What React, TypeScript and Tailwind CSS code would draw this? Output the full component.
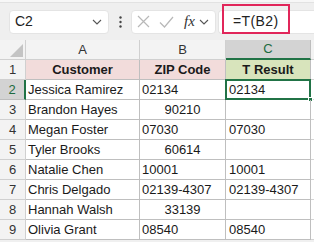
import React from "react";

type Row = { n: number; name: string; zip: string; zipNum?: boolean; t: string };

const rows: Row[] = [
  { n: 2, name: "Jessica Ramirez", zip: "02134", t: "02134" },
  { n: 3, name: "Brandon Hayes", zip: "90210", zipNum: true, t: "" },
  { n: 4, name: "Megan Foster", zip: "07030", t: "07030" },
  { n: 5, name: "Tyler Brooks", zip: "60614", zipNum: true, t: "" },
  { n: 6, name: "Natalie Chen", zip: "10001", t: "10001" },
  { n: 7, name: "Chris Delgado", zip: "02139-4307", t: "02139-4307" },
  { n: 8, name: "Hannah Walsh", zip: "33139", zipNum: true, t: "" },
  { n: 9, name: "Olivia Grant", zip: "08540", t: "08540" },
];

const Chevron = () => (
  <svg width="10" height="6" viewBox="0 0 10 6" fill="none">
    <path d="M1 1l4 4 4-4" stroke="#555" strokeWidth="1.1" />
  </svg>
);

export default function App() {
  return (
    <div className="w-[314px] h-[242px] overflow-hidden bg-[#f0f0f0] font-['Liberation_Sans',Arial,sans-serif] text-[13px] text-[#1a1a1a]">
      {/* top strip */}
      <div className="h-[3px] bg-[#f7f7f7] border-b border-[#e2e2e2]" />

      {/* formula bar */}
      <div className="relative h-[37px] flex items-center pl-[9px] bg-[#efefef]">
        <div className="w-[100px] h-[24px] bg-white rounded-[4px] border border-[#e4e4e4] flex items-center justify-between pl-[5px] pr-[6px]">
          <span className="text-[14px] text-[#222]">C2</span>
          <Chevron />
        </div>
        <div className="w-[22px] flex justify-center">
          <svg width="3" height="12" viewBox="0 0 3 12">
            <circle cx="1.5" cy="1.5" r="1.2" fill="#444" />
            <circle cx="1.5" cy="6" r="1.2" fill="#444" />
            <circle cx="1.5" cy="10.5" r="1.2" fill="#444" />
          </svg>
        </div>
        <div className="w-[85px] h-[24px] bg-white rounded-[4px] border border-[#e4e4e4] flex items-center pl-[5px] pr-[3px]">
          <svg width="13" height="13" viewBox="0 0 13 13" fill="none">
            <path d="M1 1l11 11M12 1L1 12" stroke="#b8b8b8" strokeWidth="1.2" />
          </svg>
          <svg className="ml-[9px]" width="15" height="12" viewBox="0 0 15 12" fill="none">
            <path d="M1 6.5l4.5 4.5L14 1" stroke="#b8b8b8" strokeWidth="1.2" />
          </svg>
          <span className="ml-[10px] font-['Liberation_Serif',serif] italic text-[15px] text-[#333] leading-none">
            fx
          </span>
          <span className="ml-[4px]">
            <Chevron />
          </span>
        </div>
        <div className="ml-[2px] flex-1 h-[24px] bg-white rounded-l-[4px] border border-r-0 border-[#e4e4e4] flex items-center pl-[14px]">
          <span className="text-[14px] text-[#222] tracking-[0.4px]">=T(B2)</span>
        </div>
        {/* annotation box */}
        <div className="absolute left-[222px] top-[1px] w-[68px] h-[30px] border-2 border-[#e1265a]" />
      </div>

      {/* sheet */}
      <div className="bg-white">
        {/* column headers */}
        <div className="flex h-[20px] bg-[#f3f3f3] text-[#333]">
          <div className="relative w-[26px] border-r border-b border-[#d0d0d0]">
            <svg className="absolute right-[2px] bottom-[2px]" width="13" height="13" viewBox="0 0 13 13">
              <path d="M13 0V13H0Z" fill="#c4c4c4" />
            </svg>
          </div>
          <div className="w-[114px] border-r border-b border-[#d0d0d0] flex items-center justify-center">A</div>
          <div className="w-[86px] border-r border-b border-[#d0d0d0] flex items-center justify-center">B</div>
          <div className="w-[85px] bg-[#d3d3d3] border-r border-[#bdbdbd] border-b-2 border-b-[#217346] flex items-center justify-center text-[#1d6b40]">
            C
          </div>
          <div className="flex-1 border-b border-[#d0d0d0]" />
        </div>

        {/* header row */}
        <div className="flex h-[20px]">
          <div className="w-[26px] bg-[#f3f3f3] border-r border-b border-[#d0d0d0] flex items-center justify-center text-[#333]">
            1
          </div>
          <div className="w-[114px] bg-[#f2dcdb] border-r border-b border-[#bfbfbf] flex items-center justify-center font-bold">
            Customer
          </div>
          <div className="w-[86px] bg-[#f2dcdb] border-r border-b border-[#bfbfbf] flex items-center justify-center font-bold">
            ZIP Code
          </div>
          <div className="w-[85px] bg-[#d8e4bc] border-r border-b border-[#bfbfbf] flex items-center justify-center font-bold">
            T Result
          </div>
          <div className="flex-1 border-b border-[#d4d4d4]" />
        </div>

        {rows.map((r) => {
          const active = r.n === 2;
          return (
            <div key={r.n} className="flex h-[20px]">
              <div
                className={
                  active
                    ? "w-[26px] bg-[#d3d3d3] border-r-2 border-r-[#217346] border-b border-b-[#bdbdbd] flex items-center justify-center text-[#1d6b40]"
                    : "w-[26px] bg-[#f3f3f3] border-r border-b border-[#d0d0d0] flex items-center justify-center text-[#333]"
                }
              >
                {r.n}
              </div>
              <div className="w-[114px] border-r border-b border-[#bfbfbf] flex items-center pl-[2px]">
                {r.name}
              </div>
              <div
                className={
                  r.zipNum
                    ? "w-[86px] border-r border-b border-[#bfbfbf] flex items-center justify-center"
                    : "w-[86px] border-r border-b border-[#bfbfbf] flex items-center pl-[2px]"
                }
              >
                {r.zip}
              </div>
              <div className="relative w-[85px] border-r border-b border-[#bfbfbf] flex items-center pl-[3px]">
                {r.t}
                {active && (
                  <>
                    <div className="absolute -left-[1px] -top-[1px] -right-[1px] -bottom-[1px] border-2 border-[#217346]" />
                    <div className="absolute -right-[3px] -bottom-[3px] w-[5px] h-[5px] bg-[#217346] border border-white" />
                  </>
                )}
              </div>
              <div className="flex-1 border-b border-[#d4d4d4]" />
            </div>
          );
        })}
      </div>
    </div>
  );
}
